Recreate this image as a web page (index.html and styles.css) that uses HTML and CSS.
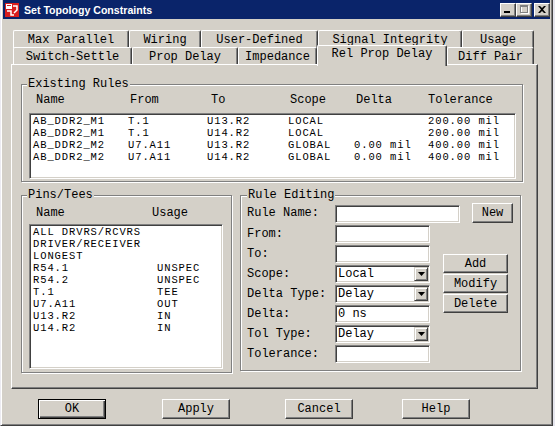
FILE: index.html
```html
<!DOCTYPE html>
<html>
<head>
<meta charset="utf-8">
<title>Set Topology Constraints</title>
<link rel="stylesheet" href="styles.css">
</head>
<body>
<div class="window">
  <div class="titlebar">
    <svg class="app-icon" width="14" height="14" viewBox="0 0 14 14">
      <rect x="0" y="0" width="14" height="14" fill="#d81e1e"/>
      <rect x="1" y="1" width="6" height="5" fill="#ffffff"/>
      <rect x="2" y="2" width="4" height="1" fill="#d81e1e"/>
      <path d="M2 8 L6 8 L6 12 L9 12" stroke="#ffffff" stroke-width="1.5" fill="none"/>
      <path d="M8 3 L12 3 L12 7 L9 10" stroke="#ffffff" stroke-width="1.5" fill="none"/>
    </svg>
    <span class="title">Set Topology Constraints</span>
    <div class="caption-buttons">
      <span class="cap-btn"><svg width="8" height="7" viewBox="0 0 8 7"><rect x="0" y="5" width="6" height="2" fill="#000"/></svg></span>
      <span class="cap-btn"><svg width="9" height="9" viewBox="0 0 9 9"><rect x="1.5" y="1.5" width="7" height="7" fill="none" stroke="#ffffff" stroke-width="1"/><rect x="0.5" y="0.5" width="7" height="7" fill="none" stroke="#808080" stroke-width="1"/><rect x="0" y="0" width="8" height="2" fill="#808080"/></svg></span>
      <span class="cap-btn close"><svg width="8" height="7" viewBox="0 0 8 7"><path d="M0 0 L2 0 L4 2 L6 0 L8 0 L5 3.5 L8 7 L6 7 L4 5 L2 7 L0 7 L3 3.5 Z" fill="#000"/></svg></span>
    </div>
  </div>

  <div class="client">
    <div class="tabstrip">
      <div class="tab-row row-back">
        <div class="tab">Max Parallel</div>
        <div class="tab">Wiring</div>
        <div class="tab">User-Defined</div>
        <div class="tab">Signal Integrity</div>
        <div class="tab">Usage</div>
      </div>
      <div class="tab-row row-front">
        <div class="tab">Switch-Settle</div>
        <div class="tab">Prop Delay</div>
        <div class="tab">Impedance</div>
        <div class="tab active">Rel Prop Delay</div>
        <div class="tab">Diff Pair</div>
      </div>
    </div>

    <div class="panel">
      <fieldset class="group rules">
        <legend>Existing Rules</legend>
        <div class="rules-head">
          <span>Name</span><span>From</span><span>To</span><span>Scope</span><span>Delta</span><span>Tolerance</span>
        </div>
        <div class="listbox rules-list">
          <div class="rule-row"><span>AB_DDR2_M1</span><span>T.1</span><span>U13.R2</span><span>LOCAL</span><span></span><span>200.00 mil</span></div>
          <div class="rule-row"><span>AB_DDR2_M1</span><span>T.1</span><span>U14.R2</span><span>LOCAL</span><span></span><span>200.00 mil</span></div>
          <div class="rule-row"><span>AB_DDR2_M2</span><span>U7.A11</span><span>U13.R2</span><span>GLOBAL</span><span>0.00 mil</span><span>400.00 mil</span></div>
          <div class="rule-row"><span>AB_DDR2_M2</span><span>U7.A11</span><span>U14.R2</span><span>GLOBAL</span><span>0.00 mil</span><span>400.00 mil</span></div>
        </div>
      </fieldset>

      <div class="lower">
        <fieldset class="group pins">
          <legend>Pins/Tees</legend>
          <div class="pins-head"><span>Name</span><span>Usage</span></div>
          <div class="listbox pins-list">
            <div class="pin-row"><span>ALL DRVRS/RCVRS</span><span></span></div>
            <div class="pin-row"><span>DRIVER/RECEIVER</span><span></span></div>
            <div class="pin-row"><span>LONGEST</span><span></span></div>
            <div class="pin-row"><span>R54.1</span><span>UNSPEC</span></div>
            <div class="pin-row"><span>R54.2</span><span>UNSPEC</span></div>
            <div class="pin-row"><span>T.1</span><span>TEE</span></div>
            <div class="pin-row"><span>U7.A11</span><span>OUT</span></div>
            <div class="pin-row"><span>U13.R2</span><span>IN</span></div>
            <div class="pin-row"><span>U14.R2</span><span>IN</span></div>
          </div>
        </fieldset>

        <fieldset class="group editing">
          <legend>Rule Editing</legend>
          <div class="name-row">
            <span class="field-label">Rule Name:</span>
            <span class="input wide"></span>
            <span class="btn new-btn">New</span>
          </div>
          <div class="edit-body">
            <div class="fields">
              <div class="field"><span class="field-label">From:</span><span class="input"></span></div>
              <div class="field"><span class="field-label">To:</span><span class="input"></span></div>
              <div class="field"><span class="field-label">Scope:</span><span class="input combo"><span class="combo-text">Local</span><span class="combo-arrow"><svg width="7" height="4" viewBox="0 0 7 4"><path d="M0 0 H7 L3.5 4 Z" fill="#000"/></svg></span></span></div>
              <div class="field"><span class="field-label">Delta Type:</span><span class="input combo"><span class="combo-text">Delay</span><span class="combo-arrow"><svg width="7" height="4" viewBox="0 0 7 4"><path d="M0 0 H7 L3.5 4 Z" fill="#000"/></svg></span></span></div>
              <div class="field"><span class="field-label">Delta:</span><span class="input"><span class="combo-text">0 ns</span></span></div>
              <div class="field"><span class="field-label">Tol Type:</span><span class="input combo"><span class="combo-text">Delay</span><span class="combo-arrow"><svg width="7" height="4" viewBox="0 0 7 4"><path d="M0 0 H7 L3.5 4 Z" fill="#000"/></svg></span></span></div>
              <div class="field"><span class="field-label">Tolerance:</span><span class="input"></span></div>
            </div>
            <div class="side-buttons">
              <span class="btn">Add</span>
              <span class="btn">Modify</span>
              <span class="btn">Delete</span>
            </div>
          </div>
        </fieldset>
      </div>
    </div>

    <div class="dialog-buttons">
      <span class="cell"><span class="btn dlg default">OK</span></span>
      <span class="cell"><span class="btn dlg">Apply</span></span>
      <span class="cell"><span class="btn dlg">Cancel</span></span>
      <span class="cell"><span class="btn dlg">Help</span></span>
    </div>
  </div>
</div>
</body>
</html>
```

FILE: styles.css
```css
* { box-sizing: border-box; }

html, body {
  margin: 0;
  padding: 0;
  width: 555px;
  height: 426px;
  overflow: hidden;
}

body {
  background: #e6e6ee;
  font-family: "Liberation Mono", "DejaVu Sans Mono", monospace;
  font-size: 12px;
  color: #000;
}

.window {
  width: 553px;
  height: 426px;
  display: flex;
  flex-direction: column;
  background: #d4d0c8;
  border-left: 1px solid #ecebf2;
  border-right: 1px solid #404040;
  border-bottom: 1px solid #404040;
  padding: 0 2px 2px 2px;
  box-shadow: inset 1px 0 #ffffff, inset -1px -1px #808080;
}

/* ---------- title bar ---------- */
.titlebar {
  height: 19px;
  flex: none;
  background: #0a246a;
  display: flex;
  align-items: center;
  padding-left: 2px;
  padding-right: 0;
}

.app-icon { flex: none; margin-right: 5px; }

.title {
  font-family: "Liberation Sans", "DejaVu Sans", sans-serif;
  font-weight: bold;
  font-size: 10.6px;
  color: #ffffff;
  flex: 1;
  white-space: nowrap;
}

.caption-buttons {
  display: flex;
  align-items: center;
  flex: none;
}

.cap-btn {
  width: 16px;
  height: 14px;
  background: #d4d0c8;
  border: 1px solid;
  border-color: #ffffff #404040 #404040 #ffffff;
  box-shadow: inset -1px -1px #808080;
  display: flex;
  align-items: center;
  justify-content: center;
}

.cap-btn.close { margin-left: 2px; }

/* ---------- client ---------- */
.client {
  flex: 1;
  display: flex;
  flex-direction: column;
  padding: 11px 12px 0 8px;
}

.tabstrip {
  padding-left: 2px;
  flex: none;
}

.tab-row {
  display: grid;
  height: 17px;
}

.row-back { grid-template-columns: 116px 72px 117px 144px 72px; }
.row-front { grid-template-columns: 119px 106px 79px 130px 87px; }

.tab {
  background: #d4d0c8;
  border-top: 1px solid #ffffff;
  border-left: 1px solid #ffffff;
  border-right: 1px solid #404040;
  box-shadow: inset -1px 0 #808080;
  border-radius: 2px 2px 0 0;
  text-align: center;
  line-height: 16px;
  padding-top: 1px;
  white-space: nowrap;
}

.tab.active {
  position: relative;
  z-index: 1;
  margin-top: -2px;
  margin-bottom: -1px;
  line-height: 15px;
}

.panel {
  height: 325px;
  flex: none;
  border: 1px solid;
  border-color: #ffffff #404040 #404040 #ffffff;
  box-shadow: inset -1px -1px #808080;
  padding: 13px 14px 0 9px;
}

/* ---------- group boxes ---------- */
.group {
  margin: 0;
  border: 1px solid #808080;
  box-shadow: 1px 1px 0 #ffffff, inset 1px 1px 0 #ffffff;
  padding: 0 6px 2px 7px;
  min-width: 0;
}

.group legend {
  padding: 0 1px;
  margin-left: -2px;
  line-height: 12px;
  background: #d4d0c8;
}

.rules-head {
  display: grid;
  grid-template-columns: 94px 81px 79px 66px 72px 1fr;
  padding: 4px 0 0 7px;
  line-height: 12px;
}

.listbox {
  background: #ffffff;
  border: 1px solid;
  border-color: #808080 #ffffff #ffffff #808080;
  box-shadow: inset 1px 1px #404040, inset -1px -1px #d4d0c8;
  padding: 1px 3px;
  font-size: 10.5px;
  letter-spacing: 0.9px;
  line-height: 12px;
}

.listbox span { white-space: pre; }

.rules-list {
  margin-top: 7px;
  height: 66px;
}

.rule-row {
  display: grid;
  grid-template-columns: 95px 79px 81px 66px 74px 1fr;
}

.lower {
  display: flex;
  margin-top: 7px;
  margin-right: 2px;
  justify-content: space-between;
  align-items: flex-start;
}

.pins {
  width: 211px;
  padding-right: 8px;
  padding-bottom: 3px;
}

.pins-head {
  display: grid;
  grid-template-columns: 116px 1fr;
  padding: 6px 0 0 7px;
  line-height: 12px;
}

.pins-list {
  margin-top: 5px;
  height: 145px;
}

.pin-row {
  display: grid;
  grid-template-columns: 124px 1fr;
}

.editing {
  width: 281px;
  padding: 0 6px 7px 6px;
}

.editing legend { margin-left: 0; }

.name-row {
  display: flex;
  align-items: flex-end;
  height: 20px;
  margin-top: 2px;
}

.field-label {
  width: 88px;
  flex: none;
  align-self: center;
  white-space: nowrap;
  line-height: 12px;
}

.input {
  display: flex;
  align-items: center;
  width: 95px;
  height: 18px;
  flex: none;
  background: #ffffff;
  border: 1px solid;
  border-color: #808080 #ffffff #ffffff #808080;
  box-shadow: inset 1px 1px #404040, inset -1px -1px #d4d0c8;
  padding: 1px 1px 1px 2px;
}

.input.wide { width: 125px; }

.combo-text {
  flex: 1;
  line-height: 14px;
  white-space: pre;
}

.combo-arrow {
  width: 14px;
  height: 14px;
  flex: none;
  background: #d4d0c8;
  border: 1px solid;
  border-color: #d4d0c8 #404040 #404040 #d4d0c8;
  box-shadow: inset 1px 1px #ffffff, inset -1px -1px #808080;
  display: flex;
  align-items: center;
  justify-content: center;
}

.btn {
  display: flex;
  align-items: center;
  justify-content: center;
  background: #d4d0c8;
  border: 1px solid;
  border-color: #ffffff #404040 #404040 #ffffff;
  box-shadow: inset -1px -1px #808080;
  line-height: 12px;
  white-space: nowrap;
}

.new-btn {
  width: 41px;
  height: 20px;
  margin-left: 12px;
}

.edit-body {
  display: flex;
  margin-top: 2px;
}

.fields {
  display: flex;
  flex-direction: column;
  gap: 2px;
}

.field {
  display: flex;
  align-items: center;
}

.side-buttons {
  display: flex;
  flex-direction: column;
  gap: 1px;
  margin-left: 13px;
  margin-top: 29px;
}

.side-buttons .btn {
  width: 65px;
  height: 19px;
}

/* ---------- dialog buttons ---------- */
.dialog-buttons {
  display: grid;
  grid-template-columns: 124px 123px 117px 68px;
  margin-top: 10px;
  padding-left: 27px;
  height: 20px;
  flex: none;
}

.btn.dlg {
  width: 68px;
  height: 20px;
}

.btn.default {
  border: 1px solid #000000;
  box-shadow: inset 1px 1px #ffffff, inset -1px -1px #404040, inset -2px -2px #808080;
}
```
